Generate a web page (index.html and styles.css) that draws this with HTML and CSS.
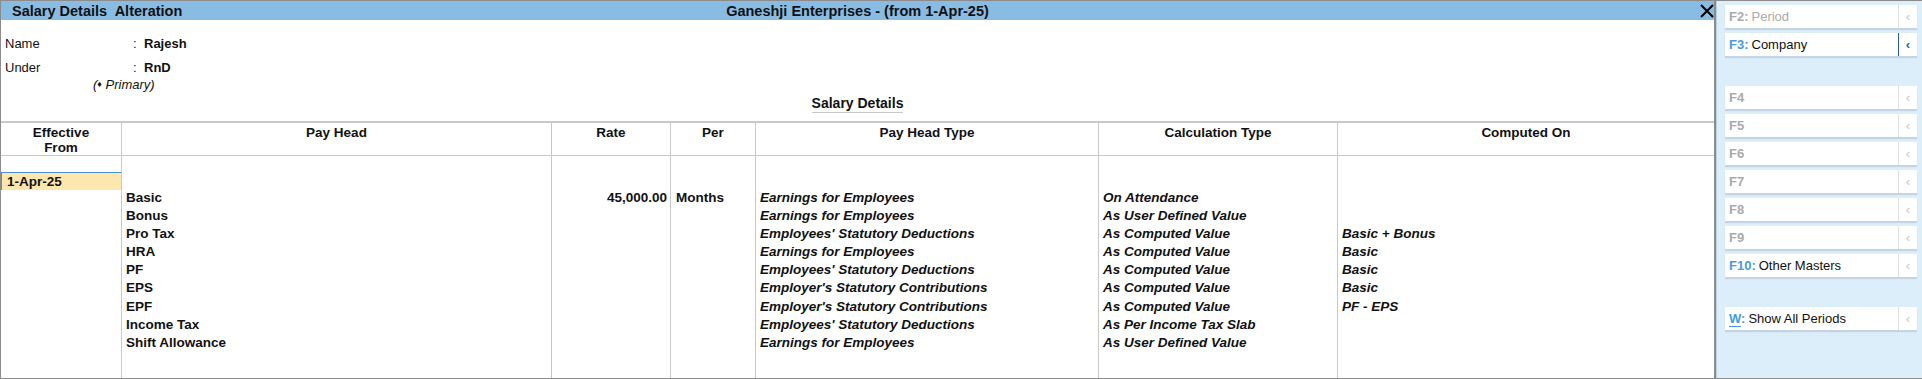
FILE: index.html
```html
<!DOCTYPE html>
<html lang="en">
<head>
    <meta charset="UTF-8">
    <title>Salary Details Alteration</title>
    <link rel="stylesheet" href="styles.css">
</head>
<body>

    <div id="pantalla">
        <div id="principal">
            <div id="barra-titulo">
                <div class="titulo-izq">Salary Details&nbsp; Alteration</div>
                <div class="titulo-centro">Ganeshji Enterprises - (from 1-Apr-25)</div>
                <div class="titulo-der">
                    <svg class="cerrar" width="14" height="14" viewBox="0 0 14 14">
                        <path d="M1 1 L13 13 M13 1 L1 13" stroke="#000" stroke-width="2" fill="none"/>
                    </svg>
                </div>
            </div>

            <div id="datos">
                <div class="fila-dato">
                    <span class="etiqueta">Name</span>
                    <span class="dos-puntos">:</span>
                    <span class="valor">Rajesh</span>
                </div>
                <div class="fila-dato">
                    <span class="etiqueta">Under</span>
                    <span class="dos-puntos">:</span>
                    <span class="valor">RnD</span>
                </div>
                <div class="primario">(<span class="rombo">&#9830;</span> Primary)</div>
                <div class="subtitulo"><span>Salary Details</span></div>
            </div>

            <div id="tabla">
                <div class="encabezado">
                    <div class="col c1">Effective<br>From</div>
                    <div class="col c2">Pay Head</div>
                    <div class="col c3">Rate</div>
                    <div class="col c4">Per</div>
                    <div class="col c5">Pay Head Type</div>
                    <div class="col c6">Calculation Type</div>
                    <div class="col c7">Computed On</div>
                </div>
                <div class="cuerpo">
                    <div class="col c1 fecha-col">
                        <div class="fecha">1-Apr-25</div>
                    </div>
                    <div class="col c2 lista negrita">
                        <div>Basic</div>
                        <div>Bonus</div>
                        <div>Pro Tax</div>
                        <div>HRA</div>
                        <div>PF</div>
                        <div>EPS</div>
                        <div>EPF</div>
                        <div>Income Tax</div>
                        <div>Shift Allowance</div>
                    </div>
                    <div class="col c3 lista negrita derecha">
                        <div>45,000.00</div>
                    </div>
                    <div class="col c4 lista negrita">
                        <div>Months</div>
                    </div>
                    <div class="col c5 lista cursiva">
                        <div>Earnings for Employees</div>
                        <div>Earnings for Employees</div>
                        <div>Employees' Statutory Deductions</div>
                        <div>Earnings for Employees</div>
                        <div>Employees' Statutory Deductions</div>
                        <div>Employer's Statutory Contributions</div>
                        <div>Employer's Statutory Contributions</div>
                        <div>Employees' Statutory Deductions</div>
                        <div>Earnings for Employees</div>
                    </div>
                    <div class="col c6 lista cursiva">
                        <div>On Attendance</div>
                        <div>As User Defined Value</div>
                        <div>As Computed Value</div>
                        <div>As Computed Value</div>
                        <div>As Computed Value</div>
                        <div>As Computed Value</div>
                        <div>As Computed Value</div>
                        <div>As Per Income Tax Slab</div>
                        <div>As User Defined Value</div>
                    </div>
                    <div class="col c7 lista cursiva">
                        <div></div>
                        <div></div>
                        <div>Basic + Bonus</div>
                        <div>Basic</div>
                        <div>Basic</div>
                        <div>Basic</div>
                        <div>PF - EPS</div>
                    </div>
                </div>
            </div>
        </div>

        <div id="lateral">
            <div class="boton inactivo"><span class="tecla">F2:</span> Period<span class="flecha">&#8249;</span></div>
            <div class="boton activo"><span class="tecla">F3:</span> Company<span class="flecha">&#8249;</span></div>
            <div class="hueco"></div>
            <div class="boton inactivo"><span class="tecla">F4</span><span class="flecha">&#8249;</span></div>
            <div class="boton inactivo"><span class="tecla">F5</span><span class="flecha">&#8249;</span></div>
            <div class="boton inactivo"><span class="tecla">F6</span><span class="flecha">&#8249;</span></div>
            <div class="boton inactivo"><span class="tecla">F7</span><span class="flecha">&#8249;</span></div>
            <div class="boton inactivo"><span class="tecla">F8</span><span class="flecha">&#8249;</span></div>
            <div class="boton inactivo"><span class="tecla">F9</span><span class="flecha">&#8249;</span></div>
            <div class="boton"><span class="tecla">F10:</span> Other Masters<span class="flecha">&#8249;</span></div>
            <div class="hueco"></div>
            <div class="boton"><span class="tecla"><u>W</u>:</span> Show All Periods<span class="flecha">&#8249;</span></div>
        </div>
    </div>

</body>
</html>
```

FILE: styles.css
```css
body {
    margin: 0;
    font-family: "Liberation Sans", Arial, sans-serif;
    font-size: 13px;
    color: #111;
    background-color: #fff;
}

#pantalla {
    display: flex;
    height: 379px;
    box-sizing: border-box;
    border-top: 1px solid #8c8c8c;
    border-bottom: 1px solid #8c8c8c;
}

#principal {
    width: 1716px;
    flex-shrink: 0;
    display: flex;
    flex-direction: column;
    box-sizing: border-box;
    border-left: 1px solid #8c8c8c;
    border-right: 2px solid #8c8c8c;
}

#barra-titulo {
    height: 19px;
    display: grid;
    grid-template-columns: 1fr auto 1fr;
    align-items: center;
    background-color: #89bce3;
    font-weight: bold;
    font-size: 14.5px;
}

.titulo-izq {
    padding-left: 11px;
}

.titulo-der {
    display: flex;
    justify-content: flex-end;
}

.cerrar {
    display: block;
}

#datos {
    height: 101px;
    padding-top: 11px;
    box-sizing: border-box;
}

.fila-dato {
    display: flex;
    height: 24px;
    align-items: center;
}

.etiqueta {
    width: 128px;
    padding-left: 4px;
}

.dos-puntos {
    width: 11px;
}

.valor {
    font-weight: bold;
}

.primario {
    padding-left: 92px;
    font-style: italic;
    margin-top: -2px;
}

.rombo {
    font-size: 9px;
    font-style: normal;
    vertical-align: 2px;
}

.subtitulo {
    text-align: center;
    font-weight: bold;
    font-size: 14px;
    margin-top: 3px;
}

.subtitulo span {
    display: inline-block;
    padding-bottom: 1px;
    border-bottom: 1px solid #c8c8c8;
}

#tabla {
    flex: 1;
    display: flex;
    flex-direction: column;
    border-top: 2px solid #c8c8c8;
}

.encabezado,
.cuerpo {
    display: grid;
    grid-template-columns: 120px 430px 119px 85px 343px 239px 1fr;
}

.encabezado {
    height: 32px;
    border-bottom: 1px solid #c8c8c8;
    font-weight: bold;
    font-size: 13.5px;
    text-align: center;
    line-height: 15px;
}

.encabezado .col {
    padding-top: 2px;
}

.cuerpo {
    flex: 1;
}

.col {
    border-left: 1px solid #c8c8c8;
}

.c1 {
    border-left: none;
}

.fecha-col {
    padding-top: 16px;
}

.fecha {
    height: 17px;
    line-height: 17px;
    background-color: #fde7ae;
    border-top: 1px solid #4a90d6;
    border-left: 1px solid #4a90d6;
    padding-left: 5px;
    font-weight: bold;
    font-size: 13.5px;
}

.lista {
    padding-top: 33px;
    font-size: 13.5px;
    line-height: 18.1px;
}

.lista div {
    height: 18.1px;
    white-space: nowrap;
}

.c2.lista {
    padding-left: 4px;
}

.c4.lista {
    padding-left: 5px;
}

.c5.lista,
.c6.lista,
.c7.lista {
    padding-left: 4px;
}

.negrita {
    font-weight: bold;
}

.cursiva {
    font-weight: bold;
    font-style: italic;
}

.derecha {
    text-align: right;
    padding-right: 3px;
}

#lateral {
    flex: 1;
    background-color: #ddeefb;
    border-left: 1px solid #b9cfe2;
    padding: 4px 5px 0 8px;
    display: flex;
    flex-direction: column;
    gap: 5px;
}

.boton {
    height: 23px;
    background-color: #fff;
    box-shadow: 0 2px 1px #c3d4e4;
    display: flex;
    align-items: center;
    padding-left: 4px;
    font-size: 13px;
    color: #111;
}

.tecla {
    font-weight: bold;
    color: #4a9ae0;
    margin-right: 3px;
}

.tecla u {
    text-decoration-thickness: 1px;
    text-underline-offset: 3px;
}

.inactivo,
.inactivo .tecla {
    color: #aaaaaa;
}

.flecha {
    margin-left: auto;
    width: 18px;
    height: 23px;
    line-height: 23px;
    text-align: center;
    border-left: 1px solid #e0e0e0;
    color: #c8c8c8;
    font-size: 13px;
}

.activo .flecha {
    border-left: 1px solid #2a5da6;
    color: #2a5da6;
    font-weight: bold;
}

.hueco {
    height: 20px;
}
```
